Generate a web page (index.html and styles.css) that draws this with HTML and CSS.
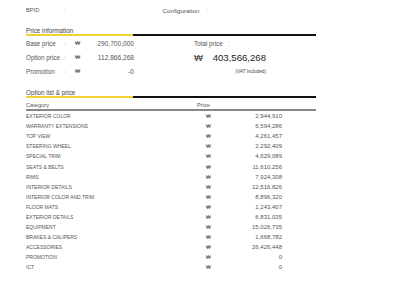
FILE: index.html
```html
<!DOCTYPE html>
<html>
<head>
<meta charset="utf-8">
<link rel="stylesheet" href="styles.css">
</head>
<body>
<div class="page">
  <div class="top">
    <div class="top-item"><span class="top-label">BPID</span><span class="colon">:</span></div>
    <div class="top-item conf"><span class="conf-label">Configuration</span><span class="colon">:</span></div>
  </div>

  <div class="sec-title">Price information</div>
  <div class="bar"><div class="bar-y"></div><div class="bar-k"></div></div>

  <div class="info">
    <div class="info-left">
      <div class="info-row"><span class="il">Base price</span><span class="ic">:</span><span class="iw">₩</span><span class="iv">290,700,000</span></div>
      <div class="info-row"><span class="il">Option price</span><span class="ic">:</span><span class="iw">₩</span><span class="iv">112,866,268</span></div>
      <div class="info-row"><span class="il">Promotion</span><span class="ic">:</span><span class="iw">₩</span><span class="iv">-0</span></div>
    </div>
    <div class="info-right">
      <div class="info-row total-label">Total price <span class="tc">:</span></div>
      <div class="info-row total-line"><span class="tw">₩</span><span class="tv">403,566,268</span></div>
      <div class="info-row vat">(VAT Included)</div>
    </div>
  </div>

  <div class="sec-title sec2">Option list &amp; price</div>
  <div class="bar"><div class="bar-y"></div><div class="bar-k"></div></div>

  <div class="thead"><span class="h-cat">Category</span><span class="h-price">Price</span></div>
  <div class="tbody">
    <div class="tr"><span class="c-cat">EXTERIOR COLOR</span><span class="c-w">₩</span><span class="c-v">2,944,910</span></div>
    <div class="tr"><span class="c-cat">WARRANTY EXTENSIONS</span><span class="c-w">₩</span><span class="c-v">6,594,286</span></div>
    <div class="tr"><span class="c-cat">TOP VIEW</span><span class="c-w">₩</span><span class="c-v">4,261,457</span></div>
    <div class="tr"><span class="c-cat">STEERING WHEEL</span><span class="c-w">₩</span><span class="c-v">2,292,409</span></div>
    <div class="tr"><span class="c-cat">SPECIAL TRIM</span><span class="c-w">₩</span><span class="c-v">4,629,089</span></div>
    <div class="tr"><span class="c-cat">SEATS &amp; BELTS</span><span class="c-w">₩</span><span class="c-v">11,610,256</span></div>
    <div class="tr"><span class="c-cat">RIMS</span><span class="c-w">₩</span><span class="c-v">7,924,308</span></div>
    <div class="tr"><span class="c-cat">INTERIOR DETAILS</span><span class="c-w">₩</span><span class="c-v">12,516,826</span></div>
    <div class="tr"><span class="c-cat">INTERIOR COLOR AND TRIM</span><span class="c-w">₩</span><span class="c-v">8,896,320</span></div>
    <div class="tr"><span class="c-cat">FLOOR MATS</span><span class="c-w">₩</span><span class="c-v">1,243,407</span></div>
    <div class="tr"><span class="c-cat">EXTERIOR DETAILS</span><span class="c-w">₩</span><span class="c-v">6,831,035</span></div>
    <div class="tr"><span class="c-cat">EQUIPMENT</span><span class="c-w">₩</span><span class="c-v">15,026,735</span></div>
    <div class="tr"><span class="c-cat">BRAKES &amp; CALIPERS</span><span class="c-w">₩</span><span class="c-v">1,668,782</span></div>
    <div class="tr"><span class="c-cat">ACCESSORIES</span><span class="c-w">₩</span><span class="c-v">26,426,448</span></div>
    <div class="tr"><span class="c-cat">PROMOTION</span><span class="c-w">₩</span><span class="c-v">0</span></div>
    <div class="tr"><span class="c-cat">ICT</span><span class="c-w">₩</span><span class="c-v">0</span></div>
  </div>
</div>
</body>
</html>
```

FILE: styles.css
```css
html, body {
  margin: 0;
  padding: 0;
  background: #fff;
}
.page {
  width: 290px;
  padding: 6px 0 0 26px;
  font-family: "Liberation Sans", Arial, sans-serif;
  color: #555;
  font-size: 6px;
}
.top {
  display: flex;
  height: 8px;
  align-items: center;
}
.top-item {
  display: flex;
  align-items: center;
}
.top-label {
  width: 38px;
  font-size: 5.7px;
}
.conf {
  margin-left: 97px;
}
.conf-label {
  width: 44px;
  font-size: 6.2px;
}
.colon {
  font-size: 5.5px;
  color: #888;
}
.sec-title {
  margin-top: 13px;
  height: 8px;
  line-height: 8px;
  font-size: 6.3px;
  color: #444;
}
.sec2 {
  margin-top: 11px;
}
.bar {
  display: flex;
  height: 2px;
  margin-top: -1px;
}
.bar-y {
  width: 107px;
  background: #f2d230;
}
.bar-k {
  flex: 1;
  background: #111;
}
.info {
  display: flex;
}
.info-left {
  width: 108px;
}
.info-row {
  display: flex;
  height: 14px;
  align-items: center;
}
.il {
  width: 38px;
  font-size: 6.3px;
}
.ic {
  width: 11px;
  color: #888;
}
.iw {
  width: 10px;
  font-size: 5.5px;
}
.iv {
  flex: 1;
  text-align: right;
  font-size: 6.6px;
}
.info-right {
  margin-left: 60px;
  width: 72px;
}
.total-label {
  font-size: 6.3px;
}
.tc {
  margin-left: 5px;
  color: #999;
}
.total-line {
  align-items: center;
}
.tw {
  font-size: 9.5px;
  color: #333;
  width: 19px;
}
.tv {
  font-size: 9.6px;
  color: #222;
}
.vat {
  font-size: 4.7px;
  justify-content: flex-end;
  color: #444;
}
.thead {
  display: flex;
  height: 9px;
  align-items: center;
  border-bottom: 2px solid #888;
  margin-top: 2px;
  font-size: 5.7px;
}
.h-cat {
  width: 171px;
}
.tr {
  display: flex;
  height: 10.1px;
  align-items: center;
  font-size: 5px;
}
.c-cat {
  width: 180px;
}
.c-w {
  width: 12px;
  font-size: 5px;
}
.c-v {
  width: 64px;
  text-align: right;
  font-size: 6px;
}
```
